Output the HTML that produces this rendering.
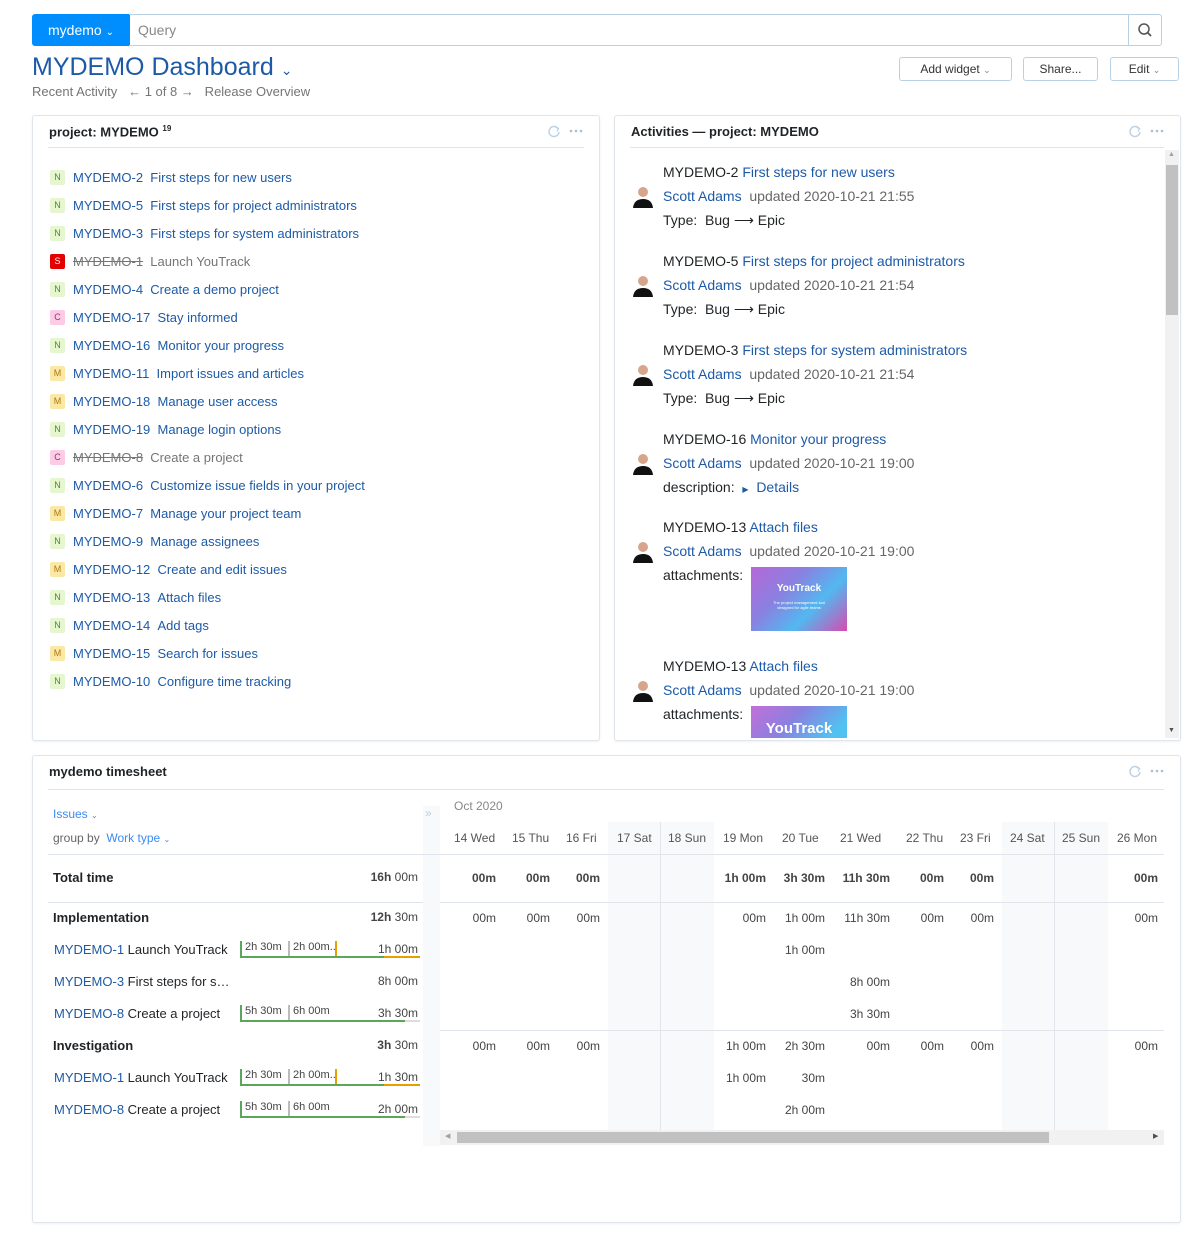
<!DOCTYPE html>
<html><head><meta charset="utf-8"><style>
*{box-sizing:border-box;margin:0;padding:0}
body{width:1194px;height:1238px;background:#fff;font-family:"Liberation Sans",Arial,sans-serif;font-size:13px;color:#1f2326;position:relative;overflow:hidden}
.a{position:absolute;white-space:nowrap}
.lnk{color:#1c5aa8}
.gray{color:#737577}
.panel{position:absolute;border:1px solid #dfe5eb;border-radius:3px;background:#fff;box-shadow:0 1px 2px rgba(0,0,0,.06)}
.btn{position:absolute;height:24px;border:1px solid #b8d1e5;border-radius:3px;font-size:12px;color:#333;text-align:center;line-height:22px}
.bd{position:absolute;width:15px;height:15px;border-radius:2px;font-size:9px;text-align:center;line-height:15px}
.N{background:#e6f6cf;color:#4d8b31}.C{background:#fdcbe6;color:#8c3a6a}.M{background:#fce8a5;color:#a87a10}.S{background:#e30000;color:#fff}
.strike{text-decoration:line-through;color:#737577}
.ava{position:absolute;width:24px;height:24px}
.col{position:absolute;background:#f7f9fa}
.hl{position:absolute;height:1px;background:#dfe5eb}
.tv{position:absolute;text-align:right;font-size:12px;color:#444;white-space:nowrap}
.b{font-weight:bold}
.bar{position:absolute;height:2px}
</style></head><body>

<div class="a" style="left:32px;top:14px;width:98px;height:32px;background:#008eff;border-radius:3px 0 0 3px;color:#fff;font-size:14px;line-height:32px;padding-left:16px">mydemo <span style="font-size:10px">&#8964;</span></div>
<div class="a" style="left:129px;top:14px;width:1000px;height:32px;border:1px solid #b8d1e5;border-left:none;font-size:14px;line-height:30px;padding-left:9px;color:#888">Query</div>
<div class="a" style="left:1128px;top:14px;width:34px;height:32px;border:1px solid #b8d1e5;border-radius:0 3px 3px 0">
<svg width="32" height="30" viewBox="0 0 32 30"><circle cx="15" cy="14" r="5" fill="none" stroke="#555" stroke-width="1.5"/><path d="M18.5 17.5 L22 21" stroke="#555" stroke-width="1.8"/></svg></div>

<div class="a" style="left:32px;top:53px;font-size:25px;color:#1c5aa8">MYDEMO Dashboard <span style="font-size:14px;color:#1c5aa8">&#8964;</span></div>
<div class="a gray" style="left:32px;top:84px;font-size:13px">Recent Activity &nbsp;&nbsp;&larr; 1 of 8 &rarr; &nbsp;&nbsp;Release Overview</div>

<div class="btn" style="left:899px;top:57px;width:113px">Add widget <span style="font-size:9px;color:#888">&#8964;</span></div>
<div class="btn" style="left:1023px;top:57px;width:75px">Share...</div>
<div class="btn" style="left:1110px;top:57px;width:69px">Edit <span style="font-size:9px;color:#888">&#8964;</span></div>

<div class="panel" style="left:32px;top:115px;width:568px;height:626px"></div>
<div class="a b" style="left:49px;top:124px;font-size:13px">project: MYDEMO <sup style="font-size:8px">19</sup></div>
<div class="hl" style="left:48px;top:147px;width:536px"></div>
<svg class="a" style="left:546px;top:124px" width="40" height="14"><path d="M12 4.5 A5 5 0 1 0 13 8" fill="none" stroke="#bcd3e6" stroke-width="1.5"/><path d="M9.5 3 L12.5 4.5 L11 7.5" fill="none" stroke="#bcd3e6" stroke-width="1.3"/><circle cx="25" cy="7" r="1.3" fill="#a9bfd2"/><circle cx="30" cy="7" r="1.3" fill="#a9bfd2"/><circle cx="35" cy="7" r="1.3" fill="#a9bfd2"/></svg>

<div class="bd N" style="left:50px;top:170px">N</div><div class="a lnk" style="left:73px;top:170px">MYDEMO-2&nbsp;&nbsp;First steps for new users</div>
<div class="bd N" style="left:50px;top:198px">N</div><div class="a lnk" style="left:73px;top:198px">MYDEMO-5&nbsp;&nbsp;First steps for project administrators</div>
<div class="bd N" style="left:50px;top:226px">N</div><div class="a lnk" style="left:73px;top:226px">MYDEMO-3&nbsp;&nbsp;First steps for system administrators</div>
<div class="bd S" style="left:50px;top:254px">S</div><div class="a gray" style="left:73px;top:254px"><span class="strike">MYDEMO-1</span>&nbsp;&nbsp;Launch YouTrack</div>
<div class="bd N" style="left:50px;top:282px">N</div><div class="a lnk" style="left:73px;top:282px">MYDEMO-4&nbsp;&nbsp;Create a demo project</div>
<div class="bd C" style="left:50px;top:310px">C</div><div class="a lnk" style="left:73px;top:310px">MYDEMO-17&nbsp;&nbsp;Stay informed</div>
<div class="bd N" style="left:50px;top:338px">N</div><div class="a lnk" style="left:73px;top:338px">MYDEMO-16&nbsp;&nbsp;Monitor your progress</div>
<div class="bd M" style="left:50px;top:366px">M</div><div class="a lnk" style="left:73px;top:366px">MYDEMO-11&nbsp;&nbsp;Import issues and articles</div>
<div class="bd M" style="left:50px;top:394px">M</div><div class="a lnk" style="left:73px;top:394px">MYDEMO-18&nbsp;&nbsp;Manage user access</div>
<div class="bd N" style="left:50px;top:422px">N</div><div class="a lnk" style="left:73px;top:422px">MYDEMO-19&nbsp;&nbsp;Manage login options</div>
<div class="bd C" style="left:50px;top:450px">C</div><div class="a gray" style="left:73px;top:450px"><span class="strike">MYDEMO-8</span>&nbsp;&nbsp;Create a project</div>
<div class="bd N" style="left:50px;top:478px">N</div><div class="a lnk" style="left:73px;top:478px">MYDEMO-6&nbsp;&nbsp;Customize issue fields in your project</div>
<div class="bd M" style="left:50px;top:506px">M</div><div class="a lnk" style="left:73px;top:506px">MYDEMO-7&nbsp;&nbsp;Manage your project team</div>
<div class="bd N" style="left:50px;top:534px">N</div><div class="a lnk" style="left:73px;top:534px">MYDEMO-9&nbsp;&nbsp;Manage assignees</div>
<div class="bd M" style="left:50px;top:562px">M</div><div class="a lnk" style="left:73px;top:562px">MYDEMO-12&nbsp;&nbsp;Create and edit issues</div>
<div class="bd N" style="left:50px;top:590px">N</div><div class="a lnk" style="left:73px;top:590px">MYDEMO-13&nbsp;&nbsp;Attach files</div>
<div class="bd N" style="left:50px;top:618px">N</div><div class="a lnk" style="left:73px;top:618px">MYDEMO-14&nbsp;&nbsp;Add tags</div>
<div class="bd M" style="left:50px;top:646px">M</div><div class="a lnk" style="left:73px;top:646px">MYDEMO-15&nbsp;&nbsp;Search for issues</div>
<div class="bd N" style="left:50px;top:674px">N</div><div class="a lnk" style="left:73px;top:674px">MYDEMO-10&nbsp;&nbsp;Configure time tracking</div>

<div class="panel" style="left:614px;top:115px;width:567px;height:626px"></div>
<div class="a b" style="left:631px;top:124px">Activities — project: MYDEMO</div>
<div class="hl" style="left:630px;top:147px;width:534px"></div>
<svg class="a" style="left:1127px;top:124px" width="40" height="14"><path d="M12 4.5 A5 5 0 1 0 13 8" fill="none" stroke="#bcd3e6" stroke-width="1.5"/><path d="M9.5 3 L12.5 4.5 L11 7.5" fill="none" stroke="#bcd3e6" stroke-width="1.3"/><circle cx="25" cy="7" r="1.3" fill="#a9bfd2"/><circle cx="30" cy="7" r="1.3" fill="#a9bfd2"/><circle cx="35" cy="7" r="1.3" fill="#a9bfd2"/></svg>
<div class="a" style="left:1165px;top:150px;width:14px;height:588px;background:#f1f1f1"></div>
<div class="a" style="left:1166px;top:165px;width:12px;height:150px;background:#c1c1c1"></div>
<div class="a" style="left:1168px;top:151px;font-size:7px;color:#a0a0a0">&#9650;</div>
<div class="a" style="left:1168px;top:727px;font-size:7px;color:#505050">&#9660;</div>

<div style="position:absolute;left:0;top:0;width:1164px;height:738px;overflow:hidden;font-size:14px">
<div class="a" style="left:663px;top:164px">MYDEMO-2 <span class="lnk">First steps for new users</span></div>
<div class="a" style="left:663px;top:188px"><span class="lnk">Scott Adams</span>&nbsp; <span style="color:#666">updated 2020-10-21 21:55</span></div>
<div class="a" style="left:663px;top:212px">Type:&nbsp; Bug &#10230; Epic</div>

<div class="a" style="left:663px;top:253px">MYDEMO-5 <span class="lnk">First steps for project administrators</span></div>
<div class="a" style="left:663px;top:277px"><span class="lnk">Scott Adams</span>&nbsp; <span style="color:#666">updated 2020-10-21 21:54</span></div>
<div class="a" style="left:663px;top:301px">Type:&nbsp; Bug &#10230; Epic</div>

<div class="a" style="left:663px;top:342px">MYDEMO-3 <span class="lnk">First steps for system administrators</span></div>
<div class="a" style="left:663px;top:366px"><span class="lnk">Scott Adams</span>&nbsp; <span style="color:#666">updated 2020-10-21 21:54</span></div>
<div class="a" style="left:663px;top:390px">Type:&nbsp; Bug &#10230; Epic</div>

<div class="a" style="left:663px;top:431px">MYDEMO-16 <span class="lnk">Monitor your progress</span></div>
<div class="a" style="left:663px;top:455px"><span class="lnk">Scott Adams</span>&nbsp; <span style="color:#666">updated 2020-10-21 19:00</span></div>
<div class="a" style="left:663px;top:479px">description:&nbsp; <span style="font-size:8px;color:#1c5aa8">&#9654;</span>&nbsp; <span class="lnk">Details</span></div>

<div class="a" style="left:663px;top:519px">MYDEMO-13 <span class="lnk">Attach files</span></div>
<div class="a" style="left:663px;top:543px"><span class="lnk">Scott Adams</span>&nbsp; <span style="color:#666">updated 2020-10-21 19:00</span></div>
<div class="a" style="left:663px;top:567px">attachments:</div>
<div class="a" style="left:751px;top:567px;width:96px;height:64px;background:linear-gradient(135deg,#b667d8 0%,#8a80e0 35%,#52b8f0 65%,#d64bb0 100%)"><div style="color:#fff;font-size:10px;font-weight:bold;text-align:center;margin-top:16px">YouTrack</div><div style="color:#fff;font-size:4px;text-align:center;margin-top:6px">The project management tool<br>designed for agile teams</div></div>

<div class="a" style="left:663px;top:658px">MYDEMO-13 <span class="lnk">Attach files</span></div>
<div class="a" style="left:663px;top:682px"><span class="lnk">Scott Adams</span>&nbsp; <span style="color:#666">updated 2020-10-21 19:00</span></div>
<div class="a" style="left:663px;top:706px">attachments:</div>
<div class="a" style="left:751px;top:706px;width:96px;height:40px;background:linear-gradient(135deg,#c36fd8 0%,#8a80e0 40%,#52c0f0 80%);"><div style="color:#fff;font-size:15px;font-weight:bold;text-align:center;margin-top:14px">YouTrack</div></div>
</div>
<svg class="ava" style="left:631px;top:184px" viewBox="0 0 24 24"><circle cx="12" cy="8" r="5" fill="#d6a58c"/><path d="M2 24 Q3 15 12 15 Q21 15 22 24Z" fill="#111"/></svg>
<svg class="ava" style="left:631px;top:273px" viewBox="0 0 24 24"><circle cx="12" cy="8" r="5" fill="#d6a58c"/><path d="M2 24 Q3 15 12 15 Q21 15 22 24Z" fill="#111"/></svg>
<svg class="ava" style="left:631px;top:362px" viewBox="0 0 24 24"><circle cx="12" cy="8" r="5" fill="#d6a58c"/><path d="M2 24 Q3 15 12 15 Q21 15 22 24Z" fill="#111"/></svg>
<svg class="ava" style="left:631px;top:451px" viewBox="0 0 24 24"><circle cx="12" cy="8" r="5" fill="#d6a58c"/><path d="M2 24 Q3 15 12 15 Q21 15 22 24Z" fill="#111"/></svg>
<svg class="ava" style="left:631px;top:539px" viewBox="0 0 24 24"><circle cx="12" cy="8" r="5" fill="#d6a58c"/><path d="M2 24 Q3 15 12 15 Q21 15 22 24Z" fill="#111"/></svg>
<svg class="ava" style="left:631px;top:678px" viewBox="0 0 24 24"><circle cx="12" cy="8" r="5" fill="#d6a58c"/><path d="M2 24 Q3 15 12 15 Q21 15 22 24Z" fill="#111"/></svg>

<div class="panel" style="left:32px;top:755px;width:1149px;height:468px"></div>
<div class="a b" style="left:49px;top:764px">mydemo timesheet</div>
<div class="hl" style="left:48px;top:789px;width:1116px"></div>
<svg class="a" style="left:1127px;top:764px" width="40" height="14"><path d="M12 4.5 A5 5 0 1 0 13 8" fill="none" stroke="#bcd3e6" stroke-width="1.5"/><path d="M9.5 3 L12.5 4.5 L11 7.5" fill="none" stroke="#bcd3e6" stroke-width="1.3"/><circle cx="25" cy="7" r="1.3" fill="#a9bfd2"/><circle cx="30" cy="7" r="1.3" fill="#a9bfd2"/><circle cx="35" cy="7" r="1.3" fill="#a9bfd2"/></svg>

<div class="a" style="left:53px;top:807px;font-size:12px;color:#3a8bf5">Issues <span style="font-size:8px">&#8964;</span></div>
<div class="a" style="left:53px;top:831px;font-size:12px;color:#666">group by &nbsp;<span style="color:#3a8bf5">Work type <span style="font-size:8px">&#8964;</span></span></div>

<div class="a" style="left:423px;top:806px;width:17px;height:340px;background:#f7f9fa"></div>
<div class="a" style="left:425px;top:806px;font-size:12px;color:#b8d1e5">&raquo;</div>

<div class="col" style="left:608px;top:822px;width:52px;height:308px"></div>
<div class="col" style="left:661px;top:822px;width:53px;height:308px"></div>
<div class="a" style="left:660px;top:822px;width:1px;height:308px;background:#dfe5eb"></div>
<div class="col" style="left:1002px;top:822px;width:52px;height:308px"></div>
<div class="col" style="left:1055px;top:822px;width:53px;height:308px"></div>
<div class="a" style="left:1054px;top:822px;width:1px;height:308px;background:#dfe5eb"></div>

<div class="a" style="left:454px;top:799px;font-size:12px;color:#888">Oct 2020</div>
<div style="position:absolute;left:0;top:831px;font-size:12px;color:#555">
<span class="a" style="left:454px">14 Wed</span><span class="a" style="left:512px">15 Thu</span><span class="a" style="left:566px">16 Fri</span><span class="a" style="left:617px">17 Sat</span><span class="a" style="left:668px">18 Sun</span><span class="a" style="left:723px">19 Mon</span><span class="a" style="left:782px">20 Tue</span><span class="a" style="left:840px">21 Wed</span><span class="a" style="left:906px">22 Thu</span><span class="a" style="left:960px">23 Fri</span><span class="a" style="left:1010px">24 Sat</span><span class="a" style="left:1062px">25 Sun</span><span class="a" style="left:1117px">26 Mon</span>
</div>

<div class="hl" style="left:48px;top:854px;width:1116px"></div>
<div class="hl" style="left:48px;top:902px;width:375px"></div>
<div class="hl" style="left:440px;top:902px;width:724px"></div>
<div class="hl" style="left:440px;top:1030px;width:724px"></div>

<div class="a b" style="left:53px;top:870px">Total time</div>
<div class="tv" style="left:340px;top:870px;width:78px"><b>16h</b> 00m</div>
<div class="a b" style="left:53px;top:910px">Implementation</div>
<div class="tv" style="left:340px;top:910px;width:78px"><b>12h</b> 30m</div>
<div class="a b" style="left:53px;top:1038px">Investigation</div>
<div class="tv" style="left:340px;top:1038px;width:78px"><b>3h</b> 30m</div>

<div class="a lnk" style="left:54px;top:942px">MYDEMO-1 <span style="color:#1f2326">Launch YouTrack</span></div>
<div class="a lnk" style="left:54px;top:974px">MYDEMO-3 <span style="color:#1f2326">First steps for s…</span></div>
<div class="a lnk" style="left:54px;top:1006px">MYDEMO-8 <span style="color:#1f2326">Create a project</span></div>
<div class="a lnk" style="left:54px;top:1070px">MYDEMO-1 <span style="color:#1f2326">Launch YouTrack</span></div>
<div class="a lnk" style="left:54px;top:1102px">MYDEMO-8 <span style="color:#1f2326">Create a project</span></div>

<div style="position:absolute;left:0;top:0;font-size:11px;color:#444">
<div class="a" style="left:240px;top:941px;height:15px;border-left:2px solid #5aa65a;padding-left:3px">2h 30m</div><div class="a" style="left:288px;top:941px;height:15px;border-left:2px solid #bbb;padding-left:3px">2h 00m..</div><div class="a" style="left:335px;top:941px;width:2px;height:15px;background:#e8a000"></div>
<div class="bar" style="left:240px;top:956px;width:144px;background:#5aa65a"></div><div class="bar" style="left:384px;top:956px;width:36px;background:#e8a000"></div>
<div class="a" style="left:240px;top:1005px;height:15px;border-left:2px solid #5aa65a;padding-left:3px">5h 30m</div><div class="a" style="left:288px;top:1005px;height:15px;border-left:2px solid #bbb;padding-left:3px">6h 00m</div>
<div class="bar" style="left:240px;top:1020px;width:165px;background:#5aa65a"></div><div class="bar" style="left:405px;top:1020px;width:15px;background:#ddd"></div>
<div class="a" style="left:240px;top:1069px;height:15px;border-left:2px solid #5aa65a;padding-left:3px">2h 30m</div><div class="a" style="left:288px;top:1069px;height:15px;border-left:2px solid #bbb;padding-left:3px">2h 00m..</div><div class="a" style="left:335px;top:1069px;width:2px;height:15px;background:#e8a000"></div>
<div class="bar" style="left:240px;top:1084px;width:144px;background:#5aa65a"></div><div class="bar" style="left:384px;top:1084px;width:36px;background:#e8a000"></div>
<div class="a" style="left:240px;top:1101px;height:15px;border-left:2px solid #5aa65a;padding-left:3px">5h 30m</div><div class="a" style="left:288px;top:1101px;height:15px;border-left:2px solid #bbb;padding-left:3px">6h 00m</div>
<div class="bar" style="left:240px;top:1116px;width:165px;background:#5aa65a"></div><div class="bar" style="left:405px;top:1116px;width:15px;background:#ddd"></div>
</div>
<div class="tv" style="left:340px;top:942px;width:78px">1h 00m</div>
<div class="tv" style="left:340px;top:974px;width:78px">8h 00m</div>
<div class="tv" style="left:340px;top:1006px;width:78px">3h 30m</div>
<div class="tv" style="left:340px;top:1070px;width:78px">1h 30m</div>
<div class="tv" style="left:340px;top:1102px;width:78px">2h 00m</div>

<div style="position:absolute;left:0;top:0;font-size:12px">
<div class="tv b" style="left:440px;top:871px;width:56px">00m</div>
<div class="tv b" style="left:500px;top:871px;width:50px">00m</div>
<div class="tv b" style="left:550px;top:871px;width:50px">00m</div>
<div class="tv b" style="left:700px;top:871px;width:66px">1h 00m</div>
<div class="tv b" style="left:760px;top:871px;width:65px">3h 30m</div>
<div class="tv b" style="left:820px;top:871px;width:70px">11h 30m</div>
<div class="tv b" style="left:890px;top:871px;width:54px">00m</div>
<div class="tv b" style="left:940px;top:871px;width:54px">00m</div>
<div class="tv b" style="left:1100px;top:871px;width:58px">00m</div>

<div class="tv" style="left:440px;top:911px;width:56px">00m</div>
<div class="tv" style="left:500px;top:911px;width:50px">00m</div>
<div class="tv" style="left:550px;top:911px;width:50px">00m</div>
<div class="tv" style="left:700px;top:911px;width:66px">00m</div>
<div class="tv" style="left:760px;top:911px;width:65px">1h 00m</div>
<div class="tv" style="left:820px;top:911px;width:70px">11h 30m</div>
<div class="tv" style="left:890px;top:911px;width:54px">00m</div>
<div class="tv" style="left:940px;top:911px;width:54px">00m</div>
<div class="tv" style="left:1100px;top:911px;width:58px">00m</div>

<div class="tv" style="left:760px;top:943px;width:65px">1h 00m</div>
<div class="tv" style="left:820px;top:975px;width:70px">8h 00m</div>
<div class="tv" style="left:820px;top:1007px;width:70px">3h 30m</div>

<div class="tv" style="left:440px;top:1039px;width:56px">00m</div>
<div class="tv" style="left:500px;top:1039px;width:50px">00m</div>
<div class="tv" style="left:550px;top:1039px;width:50px">00m</div>
<div class="tv" style="left:700px;top:1039px;width:66px">1h 00m</div>
<div class="tv" style="left:760px;top:1039px;width:65px">2h 30m</div>
<div class="tv" style="left:820px;top:1039px;width:70px">00m</div>
<div class="tv" style="left:890px;top:1039px;width:54px">00m</div>
<div class="tv" style="left:940px;top:1039px;width:54px">00m</div>
<div class="tv" style="left:1100px;top:1039px;width:58px">00m</div>

<div class="tv" style="left:700px;top:1071px;width:66px">1h 00m</div>
<div class="tv" style="left:760px;top:1071px;width:65px">30m</div>
<div class="tv" style="left:760px;top:1103px;width:65px">2h 00m</div>
</div>

<div class="a" style="left:440px;top:1130px;width:724px;height:15px;background:#f1f1f1"></div>
<div class="a" style="left:457px;top:1132px;width:592px;height:11px;background:#c1c1c1"></div>
<div class="a" style="left:445px;top:1132px;font-size:7px;color:#a0a0a0">&#9664;</div>
<div class="a" style="left:1153px;top:1132px;font-size:7px;color:#505050">&#9654;</div>
</body></html>
